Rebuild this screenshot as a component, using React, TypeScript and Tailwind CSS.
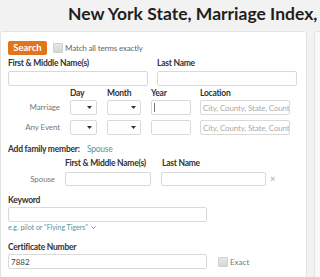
const Box = ({ w, h = 15, className = "", children }: { w: number; h?: number; className?: string; children?: React.ReactNode }) => (
  <div
    className={`shrink-0 bg-white border border-[#d9d9d9] rounded-[2px] flex items-center overflow-hidden ${className}`}
    style={{ width: w, height: h }}
  >
    {children}
  </div>
);

const Select = ({ w }: { w: number }) => (
  <div
    className="shrink-0 bg-white border border-[#d9d9d9] rounded-[2px] flex items-center justify-end pr-[4px] h-[15px]"
    style={{ width: w }}
  >
    <svg width="5" height="3" viewBox="0 0 5 3">
      <polygon points="0,0 5,0 2.5,3" fill="#333" />
    </svg>
  </div>
);

const Label = ({ children, className = "" }: { children: React.ReactNode; className?: string }) => (
  <div className={`h-[11px] leading-[11px] text-[8.5px] tracking-[-0.25px] font-bold text-[#333] whitespace-nowrap ${className}`}>
    {children}
  </div>
);

const Check = () => (
  <div className="w-[10px] h-[10px] shrink-0 rounded-[1px] border border-[#cfcfcf] bg-gradient-to-b from-[#e8e8e8] to-[#d6d6d6]" />
);

const Placeholder = () => (
  <span className="text-[8px] tracking-[-0.15px] text-[#aaa] whitespace-nowrap">City, County, State, Country</span>
);

export default function App() {
  return (
    <div className="w-[320px] h-[277px] overflow-hidden bg-[#f2f2f2] font-['Lato',sans-serif] text-[#333]">
      <h1 className="pl-[68px] pt-[3px] h-[31px] whitespace-nowrap text-[17.5px] font-bold leading-[22px] text-[#1f1f1f]">
        New York State, Marriage Index,
      </h1>
      <div className="flex gap-[7px]">
        <div className="w-[307px] h-[260px] shrink-0 bg-white border border-[#e3e3e3] rounded-[3px] pl-[7px] pt-[9px]">
          {/* search row */}
          <div className="flex items-center h-[14px]">
            <div className="w-[39px] h-[14px] rounded-[2px] bg-[#e3731c] text-white text-[9.5px] font-bold leading-[14px] text-center">
              Search
            </div>
            <div className="ml-[6px]">
              <Check />
            </div>
            <span className="ml-[2px] text-[8px] tracking-[-0.15px] text-[#666] whitespace-nowrap">Match all terms exactly</span>
          </div>

          {/* names */}
          <div className="flex mt-[3px]">
            <Label className="w-[149px]">First &amp; Middle Name(s)</Label>
            <Label>Last Name</Label>
          </div>
          <div className="flex gap-[9px] mt-[2px]">
            <Box w={140} />
            <Box w={140} />
          </div>

          {/* date headers */}
          <div className="flex mt-[2px]">
            <div className="w-[62px]" />
            <Label className="w-[37px]">Day</Label>
            <Label className="w-[44px]">Month</Label>
            <Label className="w-[49px]">Year</Label>
            <Label>Location</Label>
          </div>
          <div className="flex items-center mt-[1px]">
            <div className="w-[52px] text-right text-[8px] tracking-[-0.1px] text-[#777] leading-[15px]">Marriage</div>
            <div className="flex items-center gap-[10px] ml-[10px]">
              <Select w={27} />
              <Select w={34} />
              <Box w={40} className="border-[#8a8a8a] pl-[2px]">
                <div className="w-[1px] h-[9px] bg-[#777]" />
              </Box>
            </div>
            <Box w={90} className="ml-[9px] pl-[2px]">
              <Placeholder />
            </Box>
          </div>
          <div className="flex items-center mt-[5px]">
            <div className="w-[52px] text-right text-[8px] tracking-[-0.1px] text-[#777] leading-[15px] whitespace-nowrap">Any Event</div>
            <div className="flex items-center gap-[10px] ml-[10px]">
              <Select w={27} />
              <Select w={34} />
              <Box w={40} />
            </div>
            <Box w={90} className="ml-[9px] pl-[2px]">
              <Placeholder />
            </Box>
          </div>

          {/* family */}
          <div className="flex mt-[9px] h-[11px] leading-[11px] text-[8.5px] tracking-[-0.25px] whitespace-nowrap">
            <span className="font-bold text-[#333] w-[79px]">Add family member:</span>
            <span className="text-[#4f95a8]">Spouse</span>
          </div>
          <div className="flex mt-[3px]">
            <div className="w-[57px]" />
            <Label className="w-[97px]">First &amp; Middle Name(s)</Label>
            <Label>Last Name</Label>
          </div>
          <div className="flex items-center mt-[3px]">
            <div className="w-[47px] text-right text-[8px] tracking-[-0.1px] text-[#777] leading-[14px]">Spouse</div>
            <Box w={86} h={14} className="ml-[10px]" />
            <Box w={105} h={14} className="ml-[10px]" />
            <span className="ml-[4px] text-[9px] leading-[14px] text-[#aaa]">×</span>
          </div>

          {/* keyword */}
          <Label className="mt-[9px]">Keyword</Label>
          <div className="mt-[1px]">
            <Box w={199} />
          </div>
          <div className="flex items-center h-[10px] leading-[10px] text-[7px] text-[#4f95a8] whitespace-nowrap">
            <span>e.g. pilot or "Flying Tigers"</span>
            <svg className="ml-[3px]" width="5" height="3" viewBox="0 0 5 3">
              <polyline points="0.5,0.5 2.5,2.5 4.5,0.5" fill="none" stroke="#4f95a8" strokeWidth="1" />
            </svg>
          </div>

          {/* certificate */}
          <Label className="mt-[10px]">Certificate Number</Label>
          <div className="flex items-center mt-[1px]">
            <Box w={199} className="pl-[2px]">
              <span className="text-[8px] text-[#444]">7882</span>
            </Box>
            <div className="ml-[11px]">
              <Check />
            </div>
            <span className="ml-[2px] text-[8px] text-[#777]">Exact</span>
          </div>
        </div>
        <div className="w-[20px] h-[260px] shrink-0 bg-[#f8f8f8] border border-[#e3e3e3] rounded-[3px]" />
      </div>
    </div>
  );
}
